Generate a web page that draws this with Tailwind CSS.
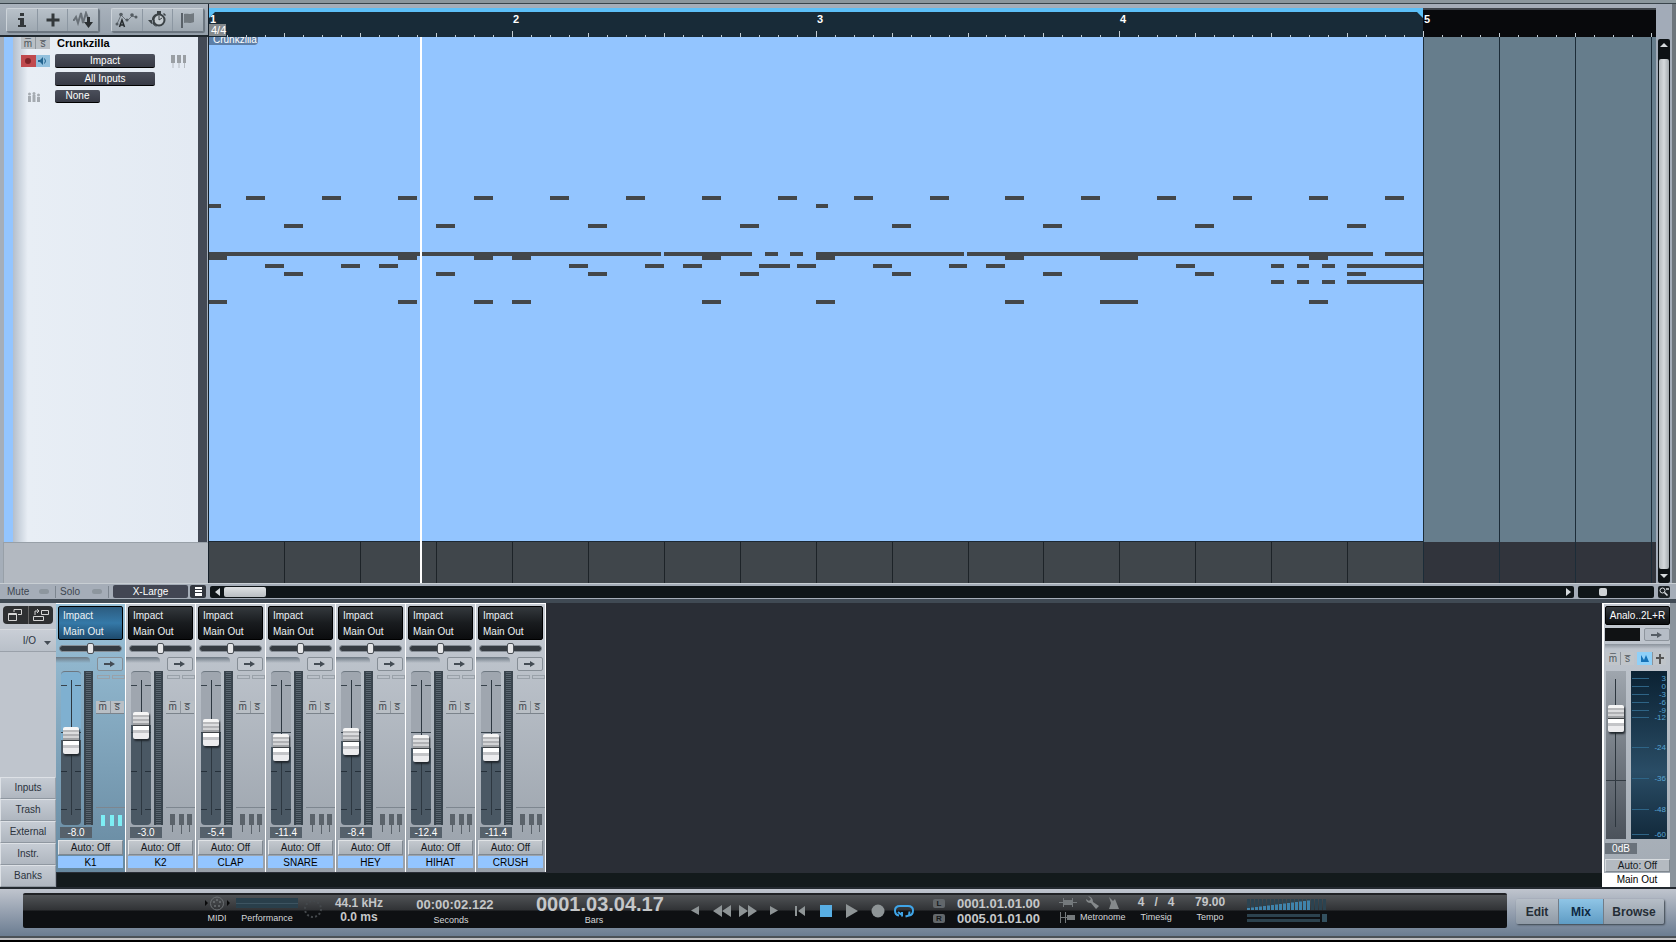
<!DOCTYPE html>
<html lang="en">
<head>
<meta charset="utf-8">
<title>Crunkzilla</title>
<script src="https://cdn.jsdelivr.net/npm/@tailwindcss/browser@4"></script>
</head>
<body class="bg-[#8f99a3] font-['Liberation_Sans',Arial,sans-serif] text-[10px] leading-[12px] text-[#2b333d]">
<div class="flex min-h-screen flex-col">

  <!-- Window frame -->
  <div class="h-1 border-b border-[#39444b] bg-[#8b979d]"></div>

  <!-- Arrangement -->
  <main class="flex flex-1">
    <!-- Track column -->
    <section class="flex w-[208px] flex-col bg-[#a5aeb9]" aria-label="Tracks">
      <div class="flex h-[33px] gap-3 border-b-2 border-[#20282e] bg-linear-to-b from-[#aab3bd] to-[#96a1ac] pt-1 pl-[6px]">
        <div class="flex h-6 w-[93px] divide-x divide-[#8c97a2] rounded-xs border border-t-[#ccd3d9] border-r-[#6c7680] border-b-[#6c7680] border-l-[#ccd3d9] bg-linear-to-b from-[#b8c1c9] to-[#9ea8b1] shadow-[1px_1px_1px_#66707a]">
          <button aria-label="Info" class="flex flex-1 items-center justify-center"><svg width="14" height="16" viewBox="0 0 14 16" fill="#33383b"><rect x="5" y="1" width="4" height="3"/><path d="M3 6h6v7h2v2H3v-2h2V8H3z"/></svg></button>
          <button aria-label="Add track" class="flex flex-1 items-center justify-center"><svg width="14" height="14" viewBox="0 0 14 14" fill="#33383b"><path d="M5.500 .5h3v5h5v3h-5v5h-3v-5h-5v-3h5z"/></svg></button>
          <button aria-label="Automation view" class="flex flex-1 items-center justify-center"><svg width="22" height="18" viewBox="0 0 22 18"><path d="M1 9h1l2-3 2 6 3-10 2 10 3-10 2 5" fill="none" stroke="#697178" stroke-width="2"/><path d="M15 6h3v5h3l-4.500 6L12 11h3z" fill="#2b3033"/></svg></button>
        </div>
        <div class="flex h-6 w-[93px] divide-x divide-[#8c97a2] rounded-xs border border-t-[#ccd3d9] border-r-[#6c7680] border-b-[#6c7680] border-l-[#ccd3d9] bg-linear-to-b from-[#b8c1c9] to-[#9ea8b1] shadow-[1px_1px_1px_#66707a]">
          <button aria-label="Show automation" class="flex flex-1 items-center justify-center"><svg width="24" height="18" viewBox="0 0 24 18"><path d="M2 13 6 4l6 6 5-5 4 1" fill="none" stroke="#697178"/><g fill="#545c62"><circle cx="2" cy="13" r="1.500"/><circle cx="6" cy="3.500" r="1.800"/><circle cx="12" cy="9" r="1.500"/><circle cx="17" cy="4" r="1.800"/><circle cx="21" cy="6" r="1.500"/></g><path d="m4.500 16 2.500-7 2.500 7M5.300 14h3.500" fill="none" stroke="#24292c" stroke-width="1.500"/></svg></button>
          <button aria-label="Tempo track" class="flex flex-1 items-center justify-center"><svg width="20" height="18" viewBox="0 0 20 18"><circle cx="11" cy="9" r="5.500" fill="#c4cbd0" stroke="#3b4246" stroke-width="2"/><path d="M9 2.500a7 7 0 0 0 0 13.500 9 9 0 0 1 0-13.500zM0 9h7l-3.500 4zM9 0h4v3H9zM16 2l2 2-1 1-2-2z" fill="#3b4246"/><path d="M11 9V5M11 9l3-2" stroke="#3b4246"/></svg></button>
          <button aria-label="Markers" class="flex flex-1 items-center justify-center"><svg width="16" height="18" viewBox="0 0 16 18"><path d="M2 2v15" stroke="#596168" stroke-width="2"/><path d="M4 3c3-1 5 1 10-1v9c-5 2-7 0-10 1z" fill="#71797f"/></svg></button>
        </div>
      </div>
      <div class="flex flex-1">
        <div class="ml-1 w-[9px] bg-[#93c5ff]"></div>
        <div class="flex flex-1 flex-col gap-1 bg-linear-to-r from-[#b4bfcc] via-[#e8eef5] via-8% to-[#e3eaf3] pl-2">
          <div class="flex items-start gap-[7px]">
            <div class="flex h-3 w-[29px] divide-x divide-[#8f969c] bg-[#b9bfc4] text-[#4d545a]">
              <button aria-label="Mute" class="flex-1 leading-[11px]">m&#x305;</button>
              <button aria-label="Solo" class="flex-1 leading-[11px]">s&#x305;</button>
            </div>
            <h1 class="text-[11px] leading-[13px] font-bold text-black">Crunkzilla</h1>
          </div>
          <div class="flex items-center gap-[5px]">
            <div class="flex h-3 w-[29px]">
              <button aria-label="Record" class="flex flex-1 items-center justify-center bg-[#c04a4e]"><span class="size-[6px] rounded-full bg-[#7d2428]"></span></button>
              <button aria-label="Monitor" class="flex flex-1 items-center justify-center bg-[#92c0dd]"><svg width="9" height="8" viewBox="0 0 9 8"><path d="M0 3h2l3-3v8L2 5H0z" fill="#22648f"/><path d="M6.500 1.500q2 2.500 0 5" fill="none" stroke="#22648f"/></svg></button>
            </div>
            <button class="h-[14px] w-[100px] rounded-xs border-b border-black bg-linear-to-b from-[#4b4f5b] to-[#383b46] text-white">Impact</button>
            <svg class="ml-[10px]" width="17" height="13" viewBox="0 0 17 13"><g fill="#9a9fa4"><path d="M1 0h4v8H1zM7 0h4v8H7zM13 0h3v8h-3z"/><path d="M2.500 8h1v5h-1zM8.500 8h1v5h-1zM14 8h1v5h-1z" opacity=".6"/></g></svg>
          </div>
          <button class="ml-[34px] h-[14px] w-[100px] rounded-xs border-b border-black bg-linear-to-b from-[#4b4f5b] to-[#383b46] text-white">All Inputs</button>
          <div class="flex items-center gap-[15px] pl-[7px]">
            <svg width="12" height="10" viewBox="0 0 12 10" fill="#a5abb1"><path d="M0 4h3v6H0zM4.500 3h3v7h-3zM9 5h3v5H9z"/><circle cx="1.500" cy="2" r="1.500"/><circle cx="6" cy="1.500" r="1.500"/><circle cx="10.500" cy="3" r="1.500"/></svg>
            <button class="h-[13px] w-[45px] rounded-xs border-b border-black bg-linear-to-b from-[#4b4f5b] to-[#383b46] text-white">None</button>
          </div>
        </div>
        <div class="mr-[1px] w-[9px] bg-[#434955]"></div>
      </div>
      <div class="ml-[3px] h-[41px] border-t border-l border-[#98a0a8] bg-[#b3b9c1]"></div>
    </section>

    <!-- Time line -->
    <section class="relative flex min-w-0 flex-1 flex-col overflow-hidden border-l border-[#16202a] bg-[#a5aeb9] pt-1" aria-label="Timeline">
      <div class="h-[29px] overflow-hidden bg-[#08090c]"><svg id="ruler" class="block" width="1800" height="29" role="img" aria-label="Ruler"></svg></div>
      <div class="flex flex-1 overflow-hidden bg-[#667d8c]">
        <div class="relative w-[1214px] shrink-0 border-b border-[#1c2833] bg-[#93c5ff]">
          <div class="h-2 w-[49px] overflow-hidden rounded-br-sm bg-[#5d7fa8] pl-1 text-white"><span class="-mt-[3px] block">Crunkzilla</span></div>
        </div>
      </div>
      <div class="flex h-[41px]"><div class="w-[1214px] shrink-0 bg-[#40464b]"></div><div class="flex-1 bg-[#31343c]"></div></div>
      <svg id="notes" class="absolute top-[33px] left-0 h-full" width="1800" role="img" aria-label="Note events"></svg>
    </section>

    <!-- Vertical scroll bar -->
    <aside class="flex w-5 flex-col border-r-4 border-[#6d757c] bg-[#a2abb8] pt-[35px] pl-[2px]">
      <div class="mr-[2px] flex flex-1 flex-col items-center rounded-xs bg-[#0d1215]">
        <button aria-label="Scroll up" class="flex h-5 w-full items-start justify-center pt-1"><svg width="8" height="4"><path d="M0 4 4 0l4 4z" fill="#d5dadd"/></svg></button>
        <div class="w-[10px] flex-1 rounded-xs bg-linear-to-r from-[#b4babd] via-[#d5dadd] to-[#a4abaf]"></div>
        <button aria-label="Scroll down" class="flex h-[14px] w-full items-center justify-center"><svg width="8" height="4"><path d="M0 0h8L4 4z" fill="#d5dadd"/></svg></button>
      </div>
    </aside>
  </main>

  <!-- Track size and scroll strip -->
  <div class="flex h-4 items-center border-t border-[#c8ced3] bg-[#a5adb8]">
    <div class="flex w-[208px] items-center text-[#3d4650]">
      <button class="flex w-[56px] items-center gap-[10px] border-r border-[#7c858f] pl-[7px]">Mute<span class="h-[5px] w-[10px] rounded-sm bg-[#8d969e]"></span></button>
      <button class="flex w-[53px] items-center gap-[12px] border-r border-[#7c858f] pl-1">Solo<span class="h-[5px] w-[10px] rounded-sm bg-[#8d969e]"></span></button>
      <button class="ml-1 h-[13px] w-[75px] rounded-xs bg-[#424653] text-white">X-Large</button>
      <button aria-label="Track menu" class="ml-[2px] flex h-[13px] w-4 items-center justify-center rounded-xs bg-[#33373f]"><svg width="7" height="9" fill="#fff"><path d="M0 0h7v2H0zM0 3h7v2H0zM0 6h7v3H0z"/></svg></button>
    </div>
    <div class="ml-[2px] flex h-3 flex-1 items-center rounded-xs bg-[#0f1518]">
      <button aria-label="Scroll left" class="flex w-[14px] justify-center"><svg width="5" height="8"><path d="M5 0v8L0 4z" fill="#d5dadd"/></svg></button>
      <div class="h-[10px] w-[42px] rounded-xs bg-linear-to-b from-[#dfe2e4] to-[#b9bec2]"></div>
      <button aria-label="Scroll right" class="ml-auto flex w-[11px] justify-center"><svg width="5" height="8"><path d="M0 0v8l5-4z" fill="#d5dadd"/></svg></button>
    </div>
    <div class="ml-1 flex h-3 w-[76px] items-center rounded-xs bg-[#0f1518] pl-[21px]"><div class="size-2 rounded-xs bg-[#ced2d5]"></div></div>
    <button aria-label="Zoom" class="mr-[6px] ml-1 flex h-3 w-3 items-center justify-center rounded-xs bg-[#1a2024]"><svg width="10" height="9" viewBox="0 0 10 9"><circle cx="3.500" cy="3.500" r="2.500" fill="none" stroke="#dde1e4"/><path d="m5.500 5.500 3 3M7 2h3" stroke="#dde1e4" stroke-width="1.500"/></svg></button>
  </div>
  <div class="h-[4px] bg-[#404a54]"></div>

  <!-- Mixer -->
  <section class="flex border-r-[6px] border-[#8b949c] bg-[#2a2e36]" aria-label="Mixer">
    <nav class="flex w-14 flex-col bg-[#bfc5cd] pt-[3px]" aria-label="Mixer views">
      <div class="ml-[3px] flex h-[18px] w-[50px] divide-x divide-[#666] rounded-sm bg-[#2e3032]">
        <button aria-label="Detach" class="flex flex-1 items-center justify-center"><svg width="16" height="14" fill="none" stroke="#d5d5d5"><path d="M1.500 5.500h8v7h-8zM1 6.500h9M7 4V1.500h7.500v5H11"/></svg></button>
        <button aria-label="Expand" class="flex flex-1 items-center justify-center"><svg width="18" height="14" fill="none" stroke="#d5d5d5"><path d="M1.500 8.500h10v4h-10zM9.500 2.500h7v4h-7zM3 7V3h4M5 1l2 2-2 2"/></svg></button>
      </div>
      <button class="mt-[5px] flex h-[23px] items-center justify-end gap-[8px] border-y border-[#d7dbe0] border-b-[#9aa1aa] bg-linear-to-b from-[#c9ced6] to-[#b9c0c9] pr-[5px]">I/O<svg class="mt-[5px]" width="7" height="4"><path d="M0 0h7L3.500 4z" fill="#444c55"/></svg></button>
      <div id="views" class="mt-auto flex flex-col"></div>
    </nav>
    <div class="flex min-w-0 flex-1 flex-col">
      <div id="strips" class="flex flex-1"></div>
      <div class="ml-px h-[14px] bg-[#131a1c]"></div>
    </div>
    <article class="flex w-[68px] flex-col border-t border-l-2 border-white bg-linear-to-b from-[#c3c9d1] to-[#a2aab3] pl-px" aria-label="Main Out channel">
      <button class="mt-[2px] h-[19px] rounded-xs border border-black bg-linear-to-b from-[#33383d] to-[#0c0e10] whitespace-nowrap text-white">Analo..2L+R</button>
      <div class="mt-[3px] flex justify-between">
        <div class="h-[13px] w-[35px] bg-[#101214]"></div>
        <button aria-label="Output" class="flex h-[13px] w-[26px] items-center justify-center rounded-xs border border-[#8e959d] bg-[#b6bdc6]"><svg width="12" height="6"><path d="M0 2h6V0l5 3-5 3V4H0z" fill="#555d65"/></svg></button>
      </div>
      <div class="mt-[3px] h-[5px] bg-linear-to-b from-[#8b939c] to-transparent"></div>
      <div class="mt-[3px] flex h-[13px] pl-px text-[#4f565d]">
        <button aria-label="Mute" class="w-[14px] bg-[#c0c5ca] leading-[12px]">m&#x305;</button>
        <button aria-label="Solo" class="w-[14px] border-l border-[#8e959d] bg-[#c0c5ca] leading-[12px]">s&#x305;</button>
        <button aria-label="Metronome" class="ml-[3px] flex w-[15px] items-center justify-center bg-[#8fd0f8]"><svg width="10" height="9"><path d="M1 8V1l3 5 2-5 3 7z" fill="#1673b8"/></svg></button>
        <button aria-label="Options" class="flex w-[14px] items-center justify-center border-l border-[#8e959d] bg-[#c0c5ca]"><svg width="8" height="10"><path d="M3 0h2v10H3zM0 3h8v2H0z" fill="#555"/></svg></button>
      </div>
      <div class="mt-[6px] flex gap-[5px] pl-px">
        <div class="relative h-[168px] w-5 bg-linear-to-b from-[#9fa6ae] to-[#4b525b]">
          <div class="absolute top-2 bottom-3 left-[9px] w-px bg-[#2d363e]"></div>
          <div class="absolute inset-x-0 top-[109px] h-px bg-[#333b43]"></div>
          <input type="range" min="0" max="141" value="107" aria-label="Main Out level" class="relative m-0 block h-full w-5 appearance-none bg-transparent [direction:rtl] [writing-mode:vertical-lr] [&::-webkit-slider-thumb]:h-[27px] [&::-webkit-slider-thumb]:w-[16px] [&::-webkit-slider-thumb]:appearance-none [&::-webkit-slider-thumb]:rounded-xs [&::-webkit-slider-thumb]:bg-[linear-gradient(#f6f6f6_0_3px,#b9babc_3px_5px,#dcdddf_5px_7px,#b0b1b4_7px_9px,#d2d3d5_9px_11px,#a0a2a5_11px_13px,#404447_13px_14px,#fff_14px_18px,#c4c5c8_18px_21px,#ececee_21px)] [&::-webkit-slider-thumb]:shadow-[1px_2px_2px_#20262c]">
        </div>
        <svg class="bg-linear-to-b from-[#0b2233] via-[#2a4d66] via-60% to-[#12293b]" id="meter" width="36" height="168" role="img" aria-label="Output level meter"></svg>
      </div>
      <output class="mt-[4px] h-[11px] w-8 bg-[#6a727b] text-center leading-[12px] text-white">0dB</output>
      <button class="mt-[5px] h-[13px] border border-t-[#d7dbdf] border-r-[#808890] border-b-[#808890] border-l-[#d7dbdf] bg-[#b4bac1] leading-[11px] text-[#15191d]">Auto: Off</button>
      <div class="mt-px -ml-px h-[14px] bg-white text-center leading-[13px] text-black">Main Out</div>
    </article>
  </section>

  <!-- Transport -->
  <footer class="flex h-[49px] items-start gap-[9px] border-t-2 border-[#23292f] bg-linear-to-b from-[#c0c5ce] to-[#6b7c91] pt-1 pr-3 pl-[23px]">
    <div class="flex h-[35px] flex-1 justify-center rounded-xs border-t-2 border-[#202225] bg-[linear-gradient(#505356,#303235_46%,#0e1013_48%,#0e1013)] text-[9px] text-[#d5d7d9]">
      <div class="flex w-7 flex-col items-center">
        <svg width="26" height="17" viewBox="0 0 26 17"><circle cx="13" cy="8.500" r="6.500" fill="none" stroke="#6c7073"/><g fill="#6c7073"><circle cx="10" cy="7" r="1"/><circle cx="13" cy="5" r="1"/><circle cx="16" cy="7" r="1"/><circle cx="11" cy="11" r="1"/><circle cx="15" cy="11" r="1"/></g><path d="M1 5v6l3-3zM23 5v6l3-3z" fill="#08090a"/></svg>MIDI</div>
      <div class="flex w-[72px] flex-col items-center pt-[3px]"><div class="mb-1 flex h-[10px] w-[62px] shrink-0 flex-col justify-center bg-[#293f4b]"><div class="h-px bg-[#3d5461]"></div></div>Performance</div>
      <svg class="mt-1" width="20" height="20"><circle cx="10" cy="10" r="8" fill="none" stroke="#44484c" stroke-width="2" stroke-dasharray="2 2.190"/></svg>
      <div class="w-[72px] pt-px text-center text-[12px] leading-[14px] font-bold text-[#c5c7c9]"><div>44.1 kHz</div><div>0.0 ms</div></div>
      <div class="flex w-[112px] flex-col items-center pt-[2px]"><output class="pl-2 text-[13px] leading-[15px] font-bold text-[#c5c7c9]">00:00:02.122</output><span class="mt-[2px]">Seconds</span></div>
      <div class="flex w-[174px] flex-col items-center"><output class="pl-3 text-[20px] leading-[19px] font-bold text-[#c5c7c9]">0001.03.04.17</output><span>Bars</span></div>
      <div class="flex items-center pb-[2px] text-[#8e9496]">
        <button aria-label="Nudge back" class="flex w-7 justify-center"><svg width="8" height="9"><path d="M8 0v9L0 4.500z" fill="currentColor"/></svg></button>
        <button aria-label="Rewind" class="flex w-[26px] justify-center"><svg width="18" height="12"><path d="M9 0v12L0 6zM18 0v12L9 6z" fill="currentColor"/></svg></button>
        <button aria-label="Forward" class="flex w-[26px] justify-center"><svg width="18" height="12"><path d="M0 0v12l9-6zM9 0v12l9-6z" fill="currentColor"/></svg></button>
        <button aria-label="Nudge forward" class="flex w-[26px] justify-center"><svg width="8" height="9"><path d="M0 0v9l8-4.500z" fill="currentColor"/></svg></button>
        <button aria-label="Return to start" class="flex w-[26px] justify-center"><svg width="10" height="10"><path d="M0 0h2v10H0zM10 0v10L3 5z" fill="currentColor"/></svg></button>
        <button aria-label="Stop" class="flex w-[26px] justify-center"><svg width="12" height="12"><path d="M0 0h12v12H0z" fill="#58aee4"/></svg></button>
        <button aria-label="Play" class="flex w-[26px] justify-center"><svg width="12" height="14"><path d="M0 0v14l12-7z" fill="currentColor"/></svg></button>
        <button aria-label="Record" class="flex w-[26px] justify-center"><svg width="14" height="14"><circle cx="7" cy="7" r="6.500" fill="currentColor"/></svg></button>
        <button aria-label="Loop" class="flex w-[26px] justify-center"><svg width="20" height="14" viewBox="0 0 20 14" fill="none" stroke="#3fa5e8" stroke-width="2"><path d="M5 11.500Q1 11 1 6.500 1 2 6 2h8q5 0 5 4.500 0 4.500-4 5M4 8l4.500 3.500M8 12.500V8M11.500 12.500l3.500-1 .5-4"/></svg></button>
      </div>
      <div class="ml-4 flex flex-col pt-px text-[13px] leading-[15px] font-bold text-[#c5c7c9]">
        <div class="flex items-center gap-3"><span class="h-[9px] w-3 rounded-xs bg-[#62676b] text-center text-[8px] leading-[9px] text-[#15181a]">L</span>0001.01.01.00</div>
        <div class="flex items-center gap-3"><span class="h-[9px] w-3 rounded-xs bg-[#62676b] text-center text-[8px] leading-[9px] text-[#15181a]">R</span>0005.01.01.00</div>
      </div>
      <div class="ml-[19px] flex w-[70px] flex-col gap-[2px] pt-px">
        <div class="flex items-center gap-[9px]">
          <button aria-label="Pre-roll"><svg class="block" width="18" height="13"><path d="M4 2h1v9H4zM13 2h1v9h-1zM5 4h8v5H5zM0 6h18v1H0z" fill="#74797c"/></svg></button>
          <button aria-label="Metronome settings"><svg class="block" width="13" height="13" viewBox="0 0 13 13"><path d="M2 0 5 3 3 5 0 3q0 4 5 4l5 6 3-3-6-4q0-5-5-6z" fill="#85898b"/></svg></button>
          <button aria-label="Metronome on"><svg class="block" width="11" height="12"><path d="m1 0 4 4 2-2 4 10H1l2-6z" fill="#85898b"/></svg></button>
        </div>
        <div class="flex items-center gap-[5px]"><svg width="16" height="11"><path d="M1 0h1v11H1zM6 0h1v11H6zM8 3h8v5H8zM1 5h8v1H1z" fill="#74797c"/></svg><span>Metronome</span></div>
      </div>
      <div class="flex w-[54px] flex-col items-center"><span class="text-[12px] leading-[15px] font-bold text-[#c5c7c9]">4&nbsp;&nbsp; /&nbsp;&nbsp; 4</span><span class="mt-px">Timesig</span></div>
      <div class="flex w-[54px] flex-col items-center"><span class="text-[12px] leading-[15px] font-bold text-[#c5c7c9]">79.00</span><span class="mt-px">Tempo</span></div>
      <svg id="level" class="mt-1 ml-[10px]" width="80" height="24" role="img" aria-label="Main level"></svg>
    </div>
    <div class="mt-[6px] flex h-[25px] w-[148px] divide-x divide-[#717c88] overflow-hidden rounded-xs bg-linear-to-b from-[#b6bec7] to-[#8f9aa6] text-[12px] font-bold text-[#252d36] shadow-[1px_1px_2px_#3b444d]">
      <button class="w-[43px]">Edit</button><button class="w-[45px] bg-linear-to-b from-[#8fc5e6] to-[#5f9cc4] text-[#0d2942]">Mix</button><button class="flex-1">Browse</button>
    </div>
  </footer>
  <div class="h-[6px] border-t-2 border-b-[2px] border-t-[#4b5157] border-b-black bg-[#bfbfc2]"></div>
</div>

<script>
const rect = (x, y, w, h, f) => `<rect x="${x}" y="${y}" width="${w}" height="${h}" fill="${f}"/>`;
const beatX = i => Math.floor(i * 75.95 - .5);

// Bar ruler: loop range on top, ticks at the bottom edge
let r = rect(0, 0, 1214, 29, '#182b38') + rect(0, 0, 1214, 4, '#5cc0f8') + rect(1214, 0, 600, 2, '#3d4349') +
  '<path d="M0 4h6L0 10zM1214 4h-6l6 6z" fill="#5cc0f8"/>';
for (let i = 1; i < 92; i++) {
  const h = i % 16 === 0 ? 6 : i % 4 === 0 ? 4 : 2;
  r += rect(beatX(i / 4), 29 - h, 1, h, '#c3cdd3');
}
r += rect(0, 16, 17, 12, '#858a8d');
for (let b = 0; b < 5; b++) r += `<text x="${Math.max(1, beatX(b * 4) + 1)}" y="15" fill="#fff" font-size="11" font-weight="bold">${b + 1}</text>`;
r += '<text x="2" y="26" fill="#fff" font-size="11">4/4</text>';
document.getElementById('ruler').innerHTML = r;

// Notes as [row top, [start, length] ...]
const eighth = [37,113,189,265,341,417,493,569,645,721,796,872,948,1024,1100,1176].map(x => [x, 19]);
const clap = [75,227,379,531,683,834,986,1138].map(x => [x, 19]);
const kick = [[0,18],[189,19],[265,19],[303,19],[493,19],[607,19],[796,19],[891,38],[1100,19]];
const rows = [
  [159, eighth], [167, [[0,12],[607,12]]], [187, clap],
  [215, [[0,452],[455,88],[556,13],[581,13],[607,148],[758,406],[1176,38]]],
  [219, kick],
  [227, [[56,19],[132,19],[170,19],[360,19],[436,19],[474,19],[550,31],[588,19],[664,19],[740,18],[777,19],[967,19],[1062,13],[1088,12],[1113,13],[1138,76]]],
  [235, clap], [243, [[1062,13],[1088,12],[1113,13],[1138,76]]], [263, kick]
];
let n = '';
for (const [y, list] of rows) for (const [x, w] of list) n += rect(x, y, w, 4, '#43474a');
for (let i = 1; i < 24; i++) {
  n += i < 16 ? rect(beatX(i), 505, 1, 100, '#1d2328') : rect(beatX(i), 0, 1, 1200, '#1c2c38');
}
n += rect(211, 0, 2, 1200, '#fff');
document.getElementById('notes').innerHTML = n;

document.getElementById('views').innerHTML = ['Inputs', 'Trash', 'External', 'Instr.', 'Banks'].map(t =>
  `<button class="h-[22px] border border-t-[#dde1e6] border-r-[#99a1aa] border-b-[#8f97a0] border-l-[#dde1e6] bg-linear-to-b from-[#c6ccd4] to-[#afb6bf]">${t}</button>`).join('');

const keys = on => on
  ? '<svg width="22" height="20"><g fill="#7deef5"><rect x="1" y="1" width="4" height="11"/><rect x="10" y="1" width="4" height="11"/><rect x="18" y="1" width="4" height="11"/></g></svg>'
  : '<svg width="22" height="20"><g fill="#5b636b"><rect x="0" y="0" width="5" height="11"/><rect x="9" y="0" width="5" height="11"/><rect x="17" y="0" width="5" height="11"/><path d="M2 11h1v7H2zM11 11h1v9h-1zM19 11h1v7h-1z"/></g></svg>';

// Channels: name, level text, distance of the fader cap from the top
const channels = [['K1','-8.0',55],['K2','-3.0',40],['CLAP','-5.4',47],['SNARE','-11.4',62],['HEY','-8.4',56],['HIHAT','-12.4',63],['CRUSH','-11.4',62]];
document.getElementById('strips').innerHTML = channels.map(([name, db, top], i) => `
<article aria-label="${name} channel" class="flex h-[269px] w-[70px] flex-col border-t border-r border-t-white border-r-white px-[2px] ${i ? 'bg-linear-to-b from-[#c6ccd4] to-[#98a0a9]' : 'bg-linear-to-b from-[#9cc3da] to-[#6789a0]'}">
  <button class="mt-[2px] flex h-[34px] flex-col justify-between rounded-xs border border-black pt-[3px] pb-px pl-1 text-left text-[#eef3f6] ${i ? 'bg-linear-to-b from-[#34393d] via-[#191c1f] to-[#0b0c0e]' : 'bg-linear-to-b from-[#2c5c80] via-[#3579a8] to-[#1e4a6c]'}"><span>Impact</span><span>Main Out</span></button>
  <div class="mx-px mt-[5px] flex h-[7px] items-center justify-center rounded-sm border border-[#868e96] bg-[#353b41]"><span class="h-[11px] w-[7px] shrink-0 rounded-xs border border-[#4c5258] bg-[#e4e5e7]"></span></div>
  <div class="mt-[5px] flex justify-between">
    <div class="-ml-[2px] h-[6px] w-[34px] rounded-tr-sm bg-linear-to-b from-[#6c7882] to-transparent"></div>
    <button aria-label="Output" class="flex h-[14px] w-[26px] items-center justify-center rounded-xs border border-[#868e96] bg-white/10"><svg width="12" height="6"><path d="M0 2h6V0l5 3-5 3V4H0z" fill="#444c54"/></svg></button>
  </div>
  <div class="flex h-[154px] gap-[3px] pl-[3px]">
    <div class="relative w-5 shrink-0 overflow-hidden rounded-sm border-t border-[#6d7780] ${i ? 'bg-[#9fa6af]' : 'bg-[#7fb0d0]'}">
      <div class="absolute inset-x-0 bottom-0 bg-[#4a5864]" style="top:${top + 13}px"></div>
      <div class="absolute top-2 bottom-[10px] left-[10px] w-px bg-[#2d3740]"></div>
      <div class="absolute inset-x-0 top-[13px] h-px bg-[linear-gradient(90deg,#38434c_6px,transparent_6px_14px,#38434c_14px)]"></div>
      <div class="absolute inset-x-0 top-[60px] h-px bg-[#38434c]"></div>
      <div class="absolute inset-x-0 top-[99px] h-px bg-[linear-gradient(90deg,#25303a_6px,transparent_6px_14px,#25303a_14px)]"></div>
      <div class="absolute inset-x-0 top-[137px] h-px bg-[linear-gradient(90deg,#25303a_6px,transparent_6px_14px,#25303a_14px)]"></div>
      <input type="range" min="0" max="127" value="${127 - top}" aria-label="${name} level" class="relative m-0 block h-full w-5 appearance-none bg-transparent [direction:rtl] [writing-mode:vertical-lr] [&::-webkit-slider-thumb]:h-[27px] [&::-webkit-slider-thumb]:w-[16px] [&::-webkit-slider-thumb]:appearance-none [&::-webkit-slider-thumb]:rounded-xs [&::-webkit-slider-thumb]:bg-[linear-gradient(#f6f6f6_0_3px,#b9babc_3px_5px,#dcdddf_5px_7px,#b0b1b4_7px_9px,#d2d3d5_9px_11px,#a0a2a5_11px_13px,#404447_13px_14px,#fff_14px_18px,#c4c5c8_18px_21px,#ececee_21px)] [&::-webkit-slider-thumb]:shadow-[1px_2px_2px_#20262c]">
    </div>
    <div class="w-[9px] shrink-0 border-x-2 border-[#39444d] bg-[repeating-linear-gradient(#343f48_0_1px,#5a6670_1px_2px)]"></div>
    <div class="flex flex-1 flex-col pt-1">
      <div class="flex h-1 gap-[2px] pl-px"><span class="h-1 w-[13px] border border-[#99a1a9]"></span><span class="h-1 w-[13px] border border-[#99a1a9]"></span></div>
      <div class="mt-[22px] flex h-[13px] w-7 divide-x divide-[#8e959d] border-b border-[#7b838b] bg-[#b9bfc5] text-[#3f464d]">
        <button aria-label="Mute" class="flex-1 leading-[12px]">m&#x305;</button><button aria-label="Solo" class="flex-1 leading-[12px]">s&#x305;</button>
      </div>
      <div class="mt-auto flex h-[18px] justify-center border-t border-[#7d868f] pt-[6px]"><div class="h-5">${keys(!i)}</div></div>
    </div>
  </div>
  <output class="mt-[2px] ml-[2px] h-[11px] w-8 bg-[#56616b] text-center leading-[12px] text-white">${db}</output>
  <button class="mt-[2px] h-[15px] border border-t-[#e0e3e6] border-r-[#808890] border-b-[#808890] border-l-[#e0e3e6] bg-linear-to-b from-[#c3c8ce] to-[#abb2b9] leading-[13px] text-[#15191d]">Auto: Off</button>
  <div class="mt-px h-3 bg-[#93c5ff] text-center leading-[13px] text-black">${name}</div>
</article>`).join('');

// Output meter scale
document.getElementById('meter').innerHTML = [[3,7],[0,15],[-3,23],[-6,31],[-9,39],[-12,46],[-24,76],[-36,107],[-48,138],[-60,163]].map(([v, y]) =>
  `<path d="M1 ${y + .5}h17" stroke="#2e6486"/><text x="35" y="${y + 3}" text-anchor="end" font-size="8" fill="#58a5d4">${v}</text>`).join('');

let lv = '';
for (let i = 0; i < 20; i++) {
  lv += rect(i * 4, 0, 3, 11, '#2c4350');
  if (i < 16) lv += rect(i * 4, 9 - i * .5, 3, 2 + i * .5, '#3f83ab');
}
lv += rect(0, 15, 73, 3, '#2c424e') + rect(0, 20, 73, 3, '#2c424e') + rect(75, 15, 5, 8, '#33505f');
document.getElementById('level').innerHTML = lv;
</script>
</body>
</html>
